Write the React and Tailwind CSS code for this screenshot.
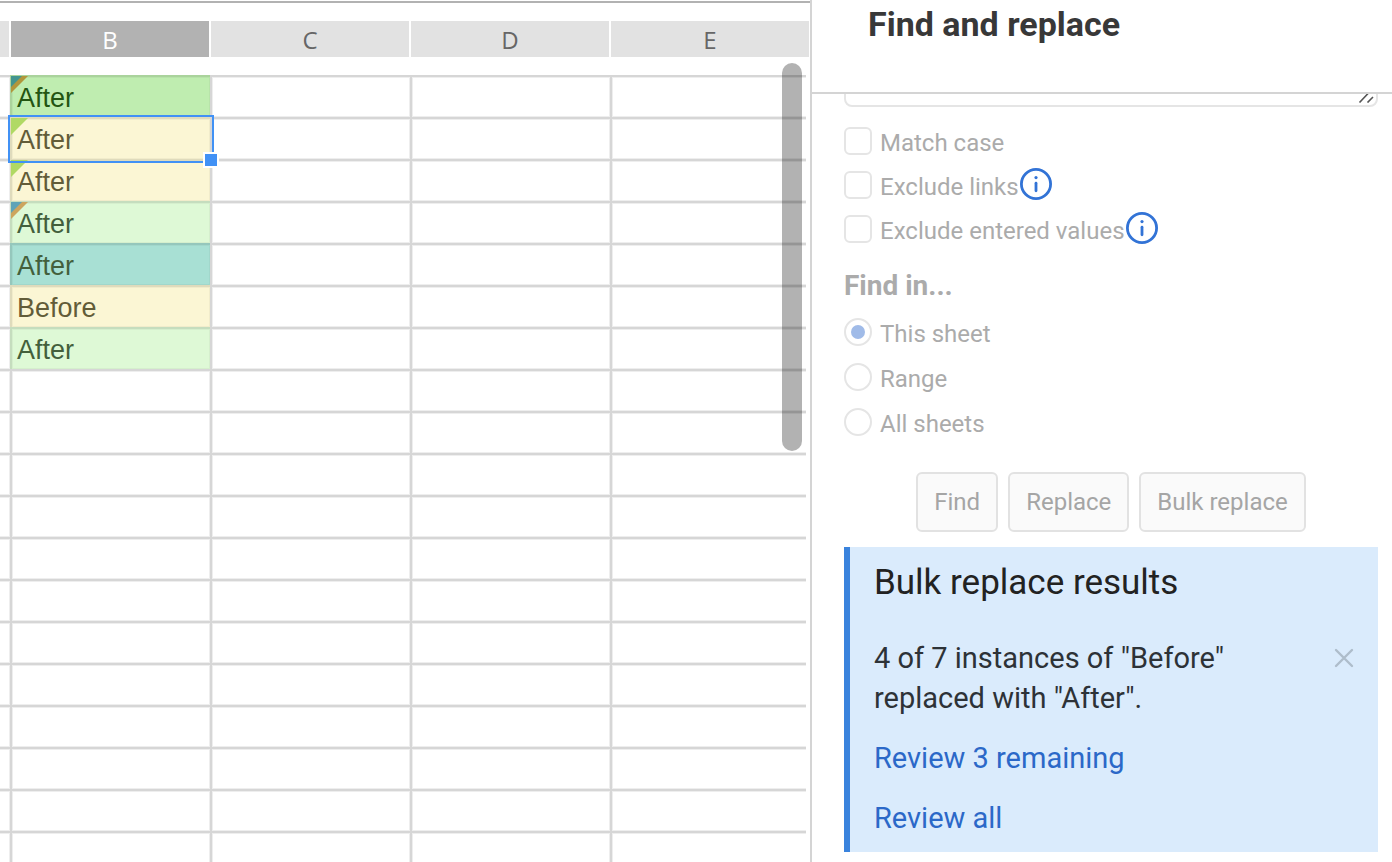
import React, { useState } from 'react';
import clsx from 'clsx';

const COLUMNS = ['B', 'C', 'D', 'E'];
const ROW_COUNT = 19;

// Column B is the only one with values, the rest of the sheet is empty
const CELLS = [
  { value: 'After', tone: 'bg-[#bfedb0] text-[#235512]', flag: { outer: '#b1963b', inner: '#42958f' } },
  { value: 'After', tone: 'bg-[#fbf6d4] text-[#625c38]', flag: { outer: '#b0d964' }, selected: true },
  { value: 'After', tone: 'bg-[#fbf6d4] text-[#625c38]', flag: { outer: '#b0d964' } },
  { value: 'After', tone: 'bg-[#def9d6] text-[#435f3c]', flag: { outer: '#cca55e', inner: '#5ea3b7' } },
  { value: 'After', tone: 'bg-[#a8e0d4] text-[#435f3c]' },
  { value: 'Before', tone: 'bg-[#fbf6d4] text-[#625c38]' },
  { value: 'After', tone: 'bg-[#def9d6] text-[#435f3c]' },
];

const OPTIONS = [
  { id: 'match-case', label: 'Match case' },
  { id: 'exclude-links', label: 'Exclude links', info: true },
  { id: 'exclude-entered', label: 'Exclude entered values', info: true },
];

const SCOPES = [
  { id: 'sheet', label: 'This sheet' },
  { id: 'range', label: 'Range' },
  { id: 'all', label: 'All sheets' },
];

function CellFlag({ outer, inner }) {
  return (
    <svg className="absolute -top-px -left-px" width="17" height="17" viewBox="0 0 17 17" aria-hidden="true">
      <path d="M0 0H17L0 17Z" fill={outer} />
      {inner && <path d="M0 0H11L0 11Z" fill={inner} />}
    </svg>
  );
}

function InfoIcon() {
  return (
    <svg width="32" height="32" viewBox="0 0 32 32" fill="none" aria-hidden="true">
      <circle cx="16" cy="16" r="14.6" stroke="#3273d6" strokeWidth="2.8" />
      <circle cx="16" cy="9.6" r="1.6" fill="#3273d6" />
      <path d="M16 15.2V22.8" stroke="#3273d6" strokeWidth="2.8" strokeLinecap="round" />
    </svg>
  );
}

function Sheet() {
  return (
    <main className="relative min-w-0 flex-1 overflow-hidden pt-px">
      <div className="mb-[18px] h-0.5 bg-[#b2b2b2]" />
      <table className="w-full table-fixed border-separate border-spacing-0">
        <colgroup>
          <col className="w-[10px]" />
          <col className="w-[200px]" />
          <col className="w-[200px]" />
          <col className="w-[200px]" />
          <col />
          <col className="w-1" />
        </colgroup>
        <thead>
          <tr className="h-[54px]">
            <th className="border-r border-b-[18px] border-white bg-[#e2e2e2] p-0" />
            {COLUMNS.map((name) => (
              <th
                key={name}
                scope="col"
                colSpan={name === 'E' ? 2 : 1}
                className={clsx(
                  "border-x border-b-[18px] border-white p-0 pt-0.5 font-['Open_Sans',sans-serif] text-2xl leading-8 font-normal",
                  name === 'B' ? 'bg-[#b2b2b2] text-white' : 'bg-[#e2e2e2] text-[#666666]'
                )}
              >
                {name}
              </th>
            ))}
          </tr>
        </thead>
        <tbody>
          {Array.from({ length: ROW_COUNT }, (_, row) => {
            const cell = CELLS[row];
            return (
              <tr key={row} className="h-[42px]">
                <td className="border-t-2 border-black/16 p-0 [box-shadow:inset_0_1px_0_#eeeeee,inset_-1px_-1px_0_#eeeeee]" />
                <td
                  className={clsx(
                    'relative border-t-2 border-l-2 p-0 pl-[5px]',
                    cell
                      ? 'border-black/11 inset-shadow-[0_0_0_1px_rgb(0_0_0_/_0.04)]'
                      : 'border-black/16 inset-shadow-[0_0_0_1px_#eeeeee]',
                    cell?.tone
                  )}
                >
                  {cell?.flag && <CellFlag {...cell.flag} />}
                  <span className="relative block pt-0.5 text-[27px] leading-[38px]">{cell?.value}</span>
                  {cell?.selected && (
                    <div className="absolute -top-1 -right-1 -bottom-1 -left-1 z-10 border-2 border-[#4191f5]">
                      <div className="absolute -right-[7px] -bottom-[7px] size-4 border-2 border-white bg-[#4191f5]" />
                    </div>
                  )}
                </td>
                <td className="border-t-2 border-l-2 border-black/16 p-0 inset-shadow-[0_0_0_1px_#eeeeee]" />
                <td className="border-t-2 border-l-2 border-black/16 p-0 inset-shadow-[0_0_0_1px_#eeeeee]" />
                <td className="border-t-2 border-l-2 border-black/16 p-0 [box-shadow:inset_1px_1px_0_#eeeeee,inset_0_-1px_0_#eeeeee]" />
                <td className="p-0" />
              </tr>
            );
          })}
        </tbody>
      </table>
      {/* Overlay scrollbar */}
      <div className="absolute top-[63px] right-2 h-[388px] w-5 rounded-full bg-black/30" />
    </main>
  );
}

function FindPanel() {
  const [scope, setScope] = useState('sheet');
  const [showResults, setShowResults] = useState(true);

  return (
    <aside className="flex w-[582px] shrink-0 flex-col border-l-2 border-[#d4d4d4] font-[Roboto,sans-serif]">
      <header className="h-[94px] shrink-0 border-b-2 border-[#d4d4d4] pt-1 pl-14">
        <h1 className="text-[34px] leading-10 font-bold text-[#383838]">Find and replace</h1>
      </header>

      <div className="min-h-0 flex-1 overflow-hidden pr-3.5 pl-8">
        <div className="relative -mt-[67px] h-20">
          <textarea
            aria-label="Replace with"
            className="block h-20 w-full resize-none rounded-lg border-2 border-[#e5e5e5] outline-none"
          />
          <svg className="absolute right-1 bottom-1 text-[#555555]" width="16" height="10" viewBox="0 0 16 10" fill="none" aria-hidden="true">
            <path d="M1.500 9.500L10.500 0M9.500 9.500L15 4" stroke="currentColor" strokeWidth="1.600" />
          </svg>
        </div>

        <div className="mt-3 text-2xl text-[#ababab]">
          {OPTIONS.map((option) => (
            <div key={option.id} className="flex h-11 items-center">
              <input
                id={option.id}
                type="checkbox"
                className="size-7 appearance-none rounded-md border-2 border-[#e5e5e5] bg-white"
              />
              <label htmlFor={option.id} className="pt-1 pl-2">{option.label}</label>
              {option.info && (
                <button type="button" aria-label={`About ${option.label}`} className="mb-0.5 ml-px">
                  <InfoIcon />
                </button>
              )}
            </div>
          ))}
        </div>

        <fieldset className="text-2xl text-[#ababab]">
          <legend className="h-[58px] pt-[15px] text-[28px] leading-10 font-bold">Find in...</legend>
          {SCOPES.map((item) => (
            <div key={item.id} className="flex h-[45px] items-center">
              <input
                id={item.id}
                type="radio"
                name="scope"
                checked={scope === item.id}
                onChange={() => setScope(item.id)}
                className="grid size-7 appearance-none place-items-center rounded-full border-2 border-[#e5e5e5] bg-white before:size-3.5 before:rounded-full checked:before:bg-[#a0bbe8]"
              />
              <label htmlFor={item.id} className="pt-1 pl-2">{item.label}</label>
            </div>
          ))}
        </fieldset>

        <div className="mt-7 flex justify-center gap-2.5 text-2xl text-[#a5a5a5]">
          <button type="button" className="h-[60px] rounded-md border-2 border-[#e2e2e2] bg-[#fafafa] px-4">Find</button>
          <button type="button" className="h-[60px] rounded-md border-2 border-[#e2e2e2] bg-[#fafafa] px-4">Replace</button>
          <button type="button" className="h-[60px] rounded-md border-2 border-[#e2e2e2] bg-[#fafafa] px-4">Bulk replace</button>
        </div>

        {showResults && (
          <section className="mt-[15px] border-l-[6px] border-[#3a83dd] bg-[#daebfc] pt-3 pr-6 pb-3.5 pl-6 text-[29px] leading-10">
            <h2 className="text-[35px] leading-12 text-[#222222]">Bulk replace results</h2>
            <div className="mt-[31px] flex justify-between">
              <p className="w-[380px] text-[#2d3237]">4 of 7 instances of "Before" replaced with "After".</p>
              <button type="button" aria-label="Dismiss" onClick={() => setShowResults(false)} className="h-10">
                <svg width="20" height="20" viewBox="0 0 20 20" aria-hidden="true">
                  <path d="M2 2L18 18M18 2L2 18" stroke="#aebdcb" strokeWidth="2.400" strokeLinecap="round" />
                </svg>
              </button>
            </div>
            <a href="#remaining" className="mt-5 block text-[#2b68c8]">Review 3 remaining</a>
            <a href="#all" className="mt-5 block text-[#2b68c8]">Review all</a>
          </section>
        )}
      </div>
    </aside>
  );
}

export default function App() {
  return (
    <div className="flex h-screen overflow-hidden bg-white font-['Liberation_Sans',sans-serif]">
      <Sheet />
      <FindPanel />
    </div>
  );
}
